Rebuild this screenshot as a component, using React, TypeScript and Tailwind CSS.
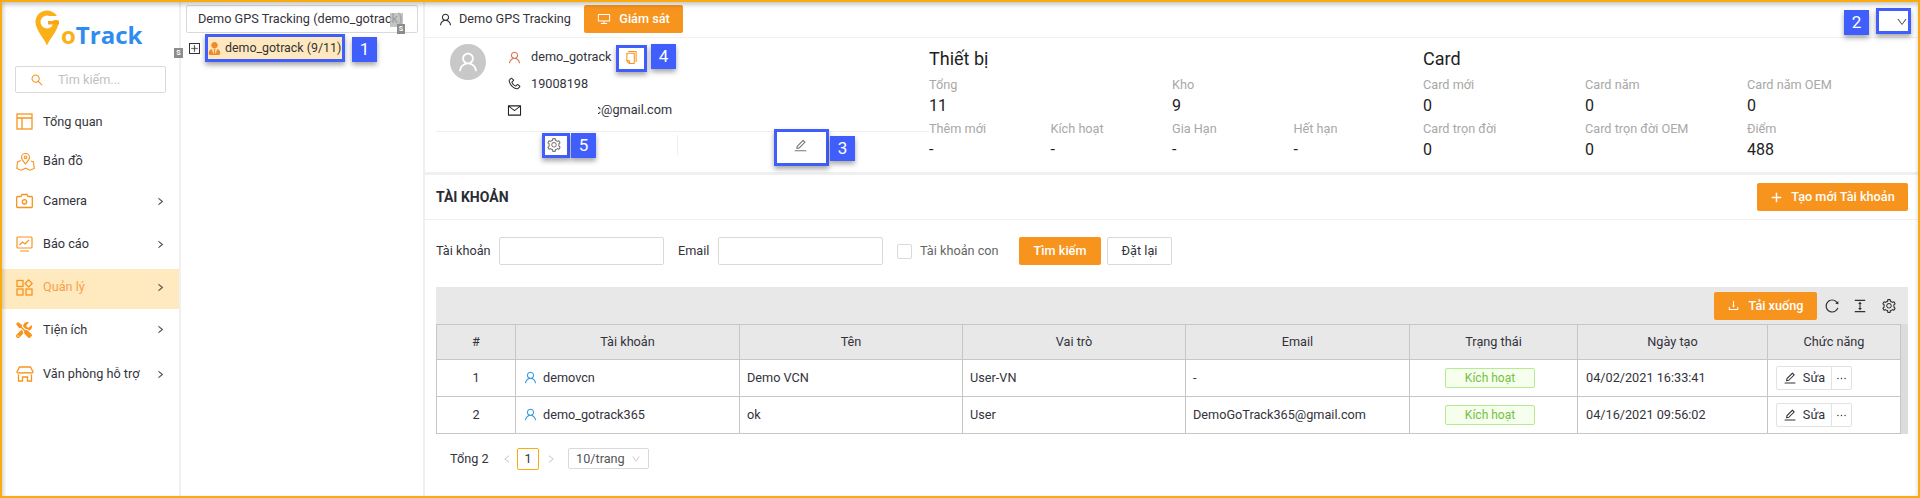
import {
  AiOutlineColumnHeight,
  AiOutlineCopy,
  AiOutlineDesktop,
  AiOutlineDown,
  AiOutlineDownload,
  AiOutlineEdit,
  AiOutlineEllipsis,
  AiOutlineLeft,
  AiOutlineMail,
  AiOutlinePhone,
  AiOutlinePlus,
  AiOutlineReload,
  AiOutlineRight,
  AiOutlineSearch,
  AiOutlineSetting,
  AiOutlineUser,
} from "react-icons/ai";
import { FaTools, FaUserTie } from "react-icons/fa";
import type { ReactNode } from "react";

const orange = "#f7941d";

const OverviewIcon = () => (
  <svg width="17" height="17" viewBox="0 0 17 17" fill="none" stroke={orange} strokeWidth="1.3">
    <rect x="1" y="1" width="15" height="15" />
    <path d="M1 5h15M6 5v11" />
  </svg>
);

const MapIcon = () => (
  <svg width="19" height="19" viewBox="0 0 19 19" fill="none" stroke={orange} strokeWidth="1.1">
    <path d="M9.5 1.5c2.4 0 4 1.8 4 3.8 0 2.4-2.4 4.6-4 6.7-1.6-2.1-4-4.3-4-6.7 0-2 1.6-3.8 4-3.8z" />
    <circle cx="9.5" cy="5.3" r="1.3" />
    <path d="M5 8.5L1.5 10 .8 16.5l4.2 1.7 4.5-2 4.5 2 4.2-1.7-.7-6.5L15 9" />
  </svg>
);

const CameraIcon = () => (
  <svg width="17" height="16" viewBox="0 0 17 16" fill="none" stroke={orange} strokeWidth="1.3">
    <path d="M1.5 3.5h3.5L6 1.5h5l1 2h3.5a.8.8 0 0 1 .8.8v9.4a.8.8 0 0 1-.8.8h-14a.8.8 0 0 1-.8-.8V4.300a.8.8 0 0 1 .8-.8z" />
    <circle cx="8.500" cy="8.800" r="2.200" />
  </svg>
);

const ReportIcon = () => (
  <svg width="17" height="17" viewBox="0 0 17 17" fill="none" stroke={orange} strokeWidth="1.2">
    <rect x="1" y="1" width="15" height="11" rx="1" />
    <path d="M3.500 9l3-3 2.500 2 4-4M4 15h9" />
  </svg>
);

const ManageIcon = () => (
  <svg width="17" height="17" viewBox="0 0 17 17" fill="none" stroke={orange} strokeWidth="1.300">
    <rect x="1" y="1.500" width="6" height="6" />
    <path d="M12.700 .9l3.500 3.600-3.500 3.600-3.500-3.600z" />
    <rect x="1" y="10" width="6" height="6" />
    <rect x="10" y="10" width="6" height="6" />
  </svg>
);

const StoreIcon = () => (
  <svg width="18" height="16" viewBox="0 0 18 16" fill="none" stroke={orange} strokeWidth="1.300">
    <path d="M3.500 1h11L17 6c0 1.500-2.700 1.500-2.700 0 0 1.500-2.650 1.500-2.650 0 0 1.500-2.650 1.500-2.650 0 0 1.500-2.650 1.500-2.650 0 0 1.500-2.650 1.500-2.650 0 0 1.500-2.700 1.500-2.700 0z" />
    <path d="M2.500 8.500V15h4v-4h5v4h4V8.500" />
  </svg>
);

function GoTrackLogo() {
  return (
    <div className="flex h-[64px] items-start pl-[33px] pt-[8px]">
      <svg width="24" height="36" viewBox="0 0 24 36">
        <path d="M12 .5C18.500 .5 23.500 5.500 23.500 12 23.500 20 15 28 12 35.500 9 28 .5 20 .5 12 .5 5.500 5.500 .5 12 .5z" fill="#fbb017" />
        <circle cx="12" cy="12" r="6.500" fill="#fff" />
        <rect x="12" y="6" width="12" height="4" fill="#fff" />
        <rect x="13" y="11" width="11" height="3.500" fill="#f9a51a" />
      </svg>
      <div className="mt-[11px] ml-[2px] font-['Open_Sans',sans-serif] text-[24px] leading-[28px] font-bold">
        <span className="text-[#fbb017]">o</span>
        <span className="text-[#2f8cf0]">Track</span>
      </div>
    </div>
  );
}

const menu = [
  { label: "Tổng quan", icon: <OverviewIcon />, cls: "mt-[9px] h-[39px]", arrow: false },
  { label: "Bản đồ", icon: <MapIcon />, cls: "h-[40px]", arrow: false },
  { label: "Camera", icon: <CameraIcon />, cls: "h-[40px]", arrow: true },
  { label: "Báo cáo", icon: <ReportIcon />, cls: "mt-[3px] h-[40px]", arrow: true },
  { label: "Quản lý", icon: <ManageIcon />, cls: "mt-[5px] h-[40px] pb-[4px] bg-[#ffe9bf] text-[#f7a24a]", arrow: true },
  { label: "Tiện ích", icon: <FaTools size={16} color={orange} />, cls: "h-[41px]", arrow: true },
  { label: "Văn phòng hỗ trợ", icon: <StoreIcon />, cls: "mt-[4px] h-[40px]", arrow: true },
];

function Sidebar() {
  return (
    <aside className="flex w-[179px] shrink-0 flex-col border-r-2 border-[#f0f0f0]">
      <GoTrackLogo />
      <div className="mx-[13px] flex h-[27px] items-center rounded-[2px] border border-[#d9d9d9] pl-[14px] text-[#bfbfbf]">
        <AiOutlineSearch size={14} color={orange} />
        <span className="ml-[14px]">Tìm kiếm...</span>
      </div>
      {menu.map((item) => (
        <div key={item.label} className={`flex items-center pl-[14px] pr-[14px] text-[#33333b] ${item.cls}`}>
          <span className="flex w-[27px] shrink-0">{item.icon}</span>
          <span className="flex-1 whitespace-nowrap">{item.label}</span>
          {item.arrow && <AiOutlineRight size={9} strokeWidth={50} color="#444" />}
        </div>
      ))}
    </aside>
  );
}

function TreePanel() {
  return (
    <div className="w-[244px] shrink-0 border-r-2 border-[#f0f0f0] pt-[3px] pl-[5px]">
      <div className="flex h-[28px] w-[232px] items-center overflow-hidden rounded-[2px] border border-[#d9d9d9] pl-[11px] whitespace-nowrap text-[#33333b]">
        Demo GPS Tracking (demo_gotrack)
      </div>
      <div className="mt-[4px] flex items-center">
        <div className="ml-[3px] flex h-[11px] w-[11px] items-center justify-center border border-[#333] text-[#333]">
          <AiOutlinePlus size={9} strokeWidth={30} />
        </div>
        <div className="ml-[8px] flex h-[22px] w-[134px] items-center bg-[#ffe8bd] text-[12.4px] whitespace-nowrap text-[#33333b]">
          <span className="flex w-[17px] shrink-0">
            <FaUserTie size={13} color="#ef8a2b" />
          </span>
          demo_gotrack (9/11)
        </div>
      </div>
    </div>
  );
}

function Stat({ label, value }: { label: string; value: string }) {
  return (
    <div>
      <div className="h-[20px] leading-[22px] whitespace-nowrap text-[#a8a8a8]">{label}</div>
      <div className="h-[24px] text-[16px] leading-[23px] text-[#222]">{value}</div>
    </div>
  );
}

function UserCard() {
  return (
    <div className="w-[504px] shrink-0">
      <div className="flex h-[93px] pl-[25px] pt-[6px]">
        <div className="flex h-[36px] w-[36px] items-center justify-center rounded-full bg-[#c8c8c8]">
          <AiOutlineUser size={24} color="#fff" />
        </div>
        <div className="ml-[21px] flex flex-col text-[#33333b]">
          <div className="flex h-[26px] items-center">
            <AiOutlineUser size={15} color="#d9785a" />
            <span className="ml-[9px] w-[80px]">demo_gotrack</span>
            <AiOutlineCopy size={15} color={orange} className="ml-[13px]" />
          </div>
          <div className="flex h-[27px] items-center">
            <AiOutlinePhone size={15} color="#333" className="-scale-x-100" />
            <span className="ml-[9px]">19008198</span>
          </div>
          <div className="flex h-[26px] items-center">
            <AiOutlineMail size={15} color="#222" />
            <span className="ml-[76px] flex w-[3px] justify-end overflow-hidden">c</span>
            <span>@gmail.com</span>
          </div>
        </div>
      </div>
      <div className="ml-[11px] flex h-[41px] border-t border-[#eeeeee] pt-[3px]">
        <div className="flex h-[20px] w-[242px] items-center justify-center border-r border-[#eeeeee] pr-[6px]">
          <AiOutlineSetting size={16} color="#777" />
        </div>
        <div className="flex h-[20px] w-[244px] items-center justify-center">
          <AiOutlineEdit size={15} color="#777" />
        </div>
      </div>
    </div>
  );
}

function StatsBlock() {
  return (
    <div className="flex flex-1 pt-[8px]">
      <div className="w-[494px] shrink-0">
        <div className="h-[28px] text-[18px] leading-[26px] text-[#222]">Thiết bị</div>
        <div className="grid grid-cols-[243px_243px]">
          <Stat label="Tổng" value="11" />
          <Stat label="Kho" value="9" />
        </div>
        <div className="grid grid-cols-[121.500px_121.500px_121.500px_121.500px]">
          <Stat label="Thêm mới" value="-" />
          <Stat label="Kích hoạt" value="-" />
          <Stat label="Gia Hạn" value="-" />
          <Stat label="Hết hạn" value="-" />
        </div>
      </div>
      <div className="flex-1">
        <div className="h-[28px] text-[18px] leading-[26px] text-[#222]">Card</div>
        <div className="grid grid-cols-[162px_162px_162px]">
          <Stat label="Card mới" value="0" />
          <Stat label="Card năm" value="0" />
          <Stat label="Card năm OEM" value="0" />
          <Stat label="Card trọn đời" value="0" />
          <Stat label="Card trọn đời OEM" value="0" />
          <Stat label="Điểm" value="488" />
        </div>
      </div>
    </div>
  );
}

const rows = [
  { id: 1, user: "demovcn", name: "Demo VCN", role: "User-VN", email: "-", date: "04/02/2021 16:33:41" },
  { id: 2, user: "demo_gotrack365", name: "ok", role: "User", email: "DemoGoTrack365@gmail.com", date: "04/16/2021 09:56:02" },
];

const headers = ["#", "Tài khoản", "Tên", "Vai trò", "Email", "Trạng thái", "Ngày tạo", "Chức năng"];

function AccountTable() {
  return (
    <div className="flex">
      <table className="w-[1464px] table-fixed border-collapse text-[#33333b]">
        <colgroup>
          <col className="w-[79px]" />
          <col className="w-[224px]" />
          <col className="w-[223px]" />
          <col className="w-[223px]" />
          <col className="w-[224px]" />
          <col className="w-[168px]" />
          <col className="w-[190px]" />
          <col className="w-[133px]" />
        </colgroup>
        <thead>
          <tr className="h-[35px] bg-[#e8e8e8]">
            {headers.map((h) => (
              <th key={h} className="border border-[#c6c6c6] font-normal">
                {h}
              </th>
            ))}
          </tr>
        </thead>
        <tbody>
          {rows.map((r) => (
            <tr key={r.id} className="h-[37px]">
              <td className="border border-[#c6c6c6] text-center">{r.id}</td>
              <td className="border border-[#c6c6c6] pl-[7px]">
                <span className="flex items-center gap-[5px]">
                  <AiOutlineUser size={15} color="#3a9ee0" />
                  {r.user}
                </span>
              </td>
              <td className="border border-[#c6c6c6] pl-[7px]">{r.name}</td>
              <td className="border border-[#c6c6c6] pl-[7px]">{r.role}</td>
              <td className="border border-[#c6c6c6] pl-[7px] whitespace-nowrap">{r.email}</td>
              <td className="border border-[#c6c6c6]">
                <div className="ml-[35px] flex h-[20px] w-[90px] items-center justify-center rounded-[2px] border border-[#b7eb8f] bg-[#f6ffed] text-[12px] text-[#74c13f]">
                  Kích hoạt
                </div>
              </td>
              <td className="border border-[#c6c6c6] pl-[8px]">{r.date}</td>
              <td className="border border-[#c6c6c6] pl-[8px]">
                <div className="flex h-[24px] w-[76px]">
                  <div className="flex flex-1 items-center justify-center gap-[6px] rounded-l-[2px] border border-[#e2e2e2]">
                    <AiOutlineEdit size={14} />
                    Sửa
                  </div>
                  <div className="-ml-px flex w-[21px] items-center justify-center rounded-r-[2px] border border-[#e2e2e2]">
                    <AiOutlineEllipsis size={13} />
                  </div>
                </div>
              </td>
            </tr>
          ))}
        </tbody>
      </table>
      <div className="w-[8px] bg-[#dcdcdc]" />
    </div>
  );
}

function OrangeButton({ children, cls }: { children: ReactNode; cls: string }) {
  return (
    <div className={`flex h-[28px] items-center justify-center rounded-[2px] bg-[#f7941d] text-white ${cls}`}>
      {children}
    </div>
  );
}

function AccountSection() {
  return (
    <div className="flex-1">
      <div className="flex h-[45px] items-center justify-between border-b border-[#f0f0f0] pr-[10px] pl-[11px]">
        <span className="text-[14px] font-bold text-[#2b2b33]">TÀI KHOẢN</span>
        <OrangeButton cls="w-[151px] gap-[8px] font-medium">
          <AiOutlinePlus size={13} strokeWidth={40} />
          Tạo mới Tài khoản
        </OrangeButton>
      </div>
      <div className="mt-[17px] flex h-[28px] items-center pl-[11px] text-[#33333b]">
        <span className="w-[63px]">Tài khoản</span>
        <div className="h-[28px] w-[165px] rounded-[2px] border border-[#d9d9d9]" />
        <span className="ml-[14px] w-[40px]">Email</span>
        <div className="h-[28px] w-[165px] rounded-[2px] border border-[#d9d9d9]" />
        <div className="ml-[14px] h-[15px] w-[15px] rounded-[2px] border border-[#d9d9d9]" />
        <span className="ml-[8px] w-[99px] text-[#666]">Tài khoản con</span>
        <OrangeButton cls="w-[82px] font-medium">Tìm kiếm</OrangeButton>
        <div className="ml-[6px] flex h-[28px] w-[65px] items-center justify-center rounded-[2px] border border-[#d9d9d9]">
          Đặt lại
        </div>
      </div>
      <div className="mt-[22px] mr-[10px] ml-[11px]">
        <div className="flex h-[37px] items-center justify-end bg-[#e8e8e8] pr-[11px]">
          <OrangeButton cls="w-[103px] gap-[8px] font-medium">
            <AiOutlineDownload size={13} />
            Tải xuống
          </OrangeButton>
          <AiOutlineReload size={16} color="#333" className="ml-[7px]" />
          <AiOutlineColumnHeight size={16} color="#333" className="ml-[12px]" />
          <AiOutlineSetting size={16} color="#333" className="ml-[13px]" />
        </div>
        <AccountTable />
      </div>
      <div className="mt-[14px] flex h-[21px] items-center pl-[25px] text-[#33333b]">
        <span className="w-[52px]">Tổng 2</span>
        <AiOutlineLeft size={10} color="#c4c4c4" />
        <div className="ml-[5px] flex h-[22px] w-[22px] items-center justify-center rounded-[2px] border border-[#f9ab0f]">1</div>
        <AiOutlineRight size={10} color="#c4c4c4" className="ml-[7px]" />
        <div className="ml-[12px] flex h-[21px] w-[81px] items-center gap-[6px] rounded-[2px] border border-[#d9d9d9] pl-[7px] text-[#555]">
          10/trang
          <AiOutlineDown size={10} color="#c4c4c4" />
        </div>
      </div>
    </div>
  );
}

function MainPanel() {
  return (
    <main className="flex min-w-0 flex-1 flex-col">
      <div className="flex h-[36px] items-start border-b border-[#f0f0f0] pt-[3px] pl-[13px] text-[#33333b]">
        <div className="flex h-[28px] w-[146px] items-center gap-[6px]">
          <AiOutlineUser size={15} color="#333" />
          Demo GPS Tracking
        </div>
        <div className="flex h-[28px] w-[99px] items-center justify-center gap-[8px] rounded-[2px] bg-[#f7941d] font-medium text-white">
          <AiOutlineDesktop size={14} />
          Giám sát
        </div>
        <AiOutlineDown size={12} color="#555" className="mt-[11px] ml-auto mr-[10px]" />
      </div>
      <div className="flex h-[137px] border-b-[3px] border-[#f0f0f0]">
        <UserCard />
        <StatsBlock />
      </div>
      <AccountSection />
    </main>
  );
}

const marks = [
  { n: "1", box: "left-[203px] top-[32px] w-[140px] h-[28px]", badge: "left-[350px] top-[35px]" },
  { n: "2", box: "left-[1874px] top-[6px] w-[35px] h-[26px]", badge: "left-[1842px] top-[8px]" },
  { n: "3", box: "left-[772px] top-[127px] w-[55px] h-[37px]", badge: "left-[828px] top-[134px]" },
  { n: "4", box: "left-[614px] top-[43px] w-[31px] h-[27px]", badge: "left-[649px] top-[42px]" },
  { n: "5", box: "left-[540px] top-[131px] w-[28px] h-[25px]", badge: "left-[569px] top-[131px]" },
];

export default function App() {
  return (
    <div className="relative flex h-[498px] w-[1920px] overflow-hidden border-2 border-[#f9ab0f] bg-white font-['Roboto',sans-serif] text-[12.7px]">
      <Sidebar />
      <TreePanel />
      <MainPanel />

      {/* annotation boxes drawn on top of the screenshot */}
      {marks.map((m) => (
        <div key={m.n}>
          <div className={`absolute border-[3px] border-[#3f5efb] shadow-[0_3px_5px_rgba(0,0,0,0.35)] ${m.box}`} />
          <div
            className={`absolute flex h-[25px] w-[25px] items-center justify-center bg-[#3f5efb] text-[17px] text-white shadow-[0_3px_5px_rgba(0,0,0,0.35)] ${m.badge}`}
          >
            {m.n}
          </div>
        </div>
      ))}
      <div className="absolute top-[11px] left-[388px] h-[14px] w-[13px] bg-[#b5b5b5]/80" />
      <div className="absolute top-[46px] left-[172px] flex h-[10px] w-[9px] items-center justify-center bg-[#8c8c8c] text-[7px] font-bold text-white">S</div>
      <div className="absolute top-[22px] left-[395px] flex h-[10px] w-[8px] items-center justify-center bg-[#8c8c8c] text-[7px] font-bold text-white">S</div>
      <div className="pointer-events-none absolute inset-0 shadow-[inset_0_3px_4px_rgba(0,0,0,0.2),inset_3px_0_3px_rgba(0,0,0,0.06)]" />
    </div>
  );
}
